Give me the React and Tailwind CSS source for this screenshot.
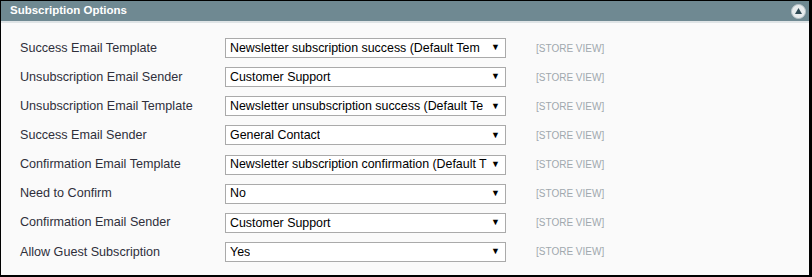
const rows = [
  ['Success Email Template', 'Newsletter subscription success (Default Tem'],
  ['Unsubscription Email Sender', 'Customer Support'],
  ['Unsubscription Email Template', 'Newsletter unsubscription success (Default Te'],
  ['Success Email Sender', 'General Contact'],
  ['Confirmation Email Template', 'Newsletter subscription confirmation (Default T'],
  ['Need to Confirm', 'No'],
  ['Confirmation Email Sender', 'Customer Support'],
  ['Allow Guest Subscription', 'Yes'],
];

export default function App() {
  return (
    <div className="w-[812px] h-[277px] bg-black pt-px pl-px pr-[3px] pb-[2px] font-['Liberation_Sans',Arial,sans-serif]">
      <div className="h-full bg-[#fafafa] flex flex-col">
        <div className="h-[22px] bg-[#6f8992] flex items-center justify-between pl-[9px] pr-[3px] border-b-2 border-[#dfe4e6]">
          <span className="text-white text-[11.5px] font-bold">Subscription Options</span>
          <span className="w-[15px] h-[15px] rounded-full bg-[#e8ecee] border border-[#b8c4c9] flex items-center justify-center">
            <svg width="7" height="6" viewBox="0 0 7 6"><path d="M3.5 0L7 6H0z" fill="#2f4a55" /></svg>
          </span>
        </div>
        <div className="pt-[15px] pl-[19px] flex flex-col gap-[9px]">
          {rows.map(([label, value]) => (
            <div key={label} className="flex items-center h-5 mb-[0.15px]">
              <div className="w-[205px] text-[12.6px] text-[#2f2f3a]">{label}</div>
              <div className="w-[281px] h-5 bg-white border border-[#aaaaaa] flex items-center justify-between pl-[4px] pr-[5px]">
                <span className="overflow-hidden whitespace-nowrap text-[12.4px] text-black">{value}</span>
                <span className="text-[9px] text-black pl-1">▼</span>
              </div>
              <div className="ml-[30px] text-[10px] text-[#a0a8ae]">[STORE VIEW]</div>
            </div>
          ))}
        </div>
      </div>
    </div>
  );
}
